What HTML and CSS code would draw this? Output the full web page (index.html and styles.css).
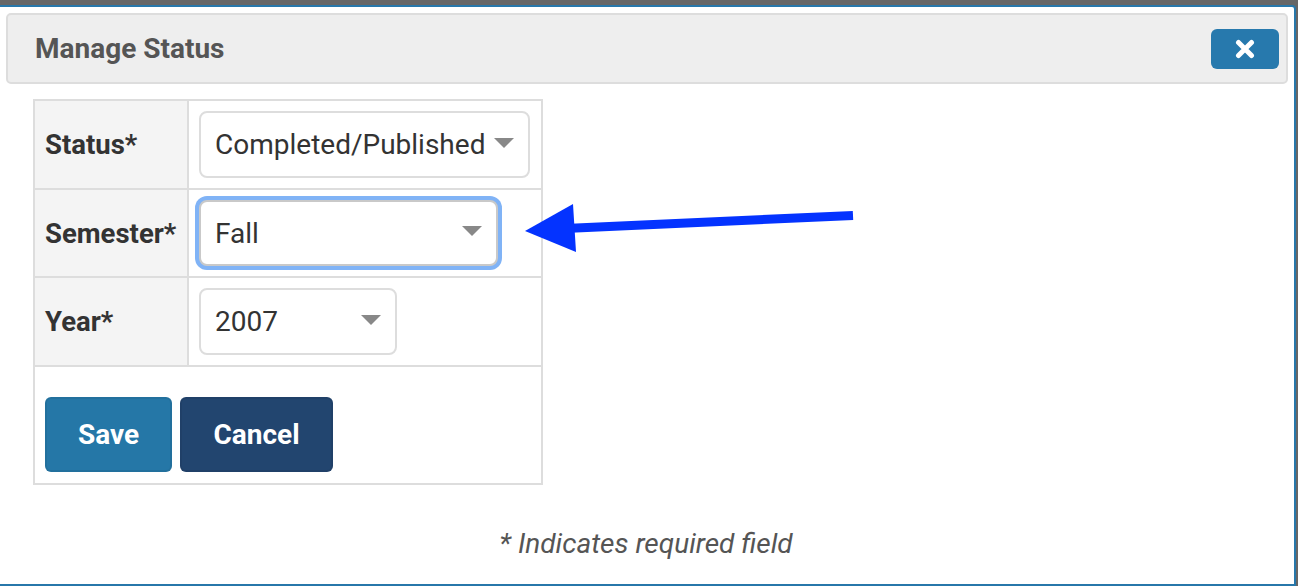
FILE: index.html
```html
<!DOCTYPE html>
<html>
<head>
<meta charset="utf-8">
<link rel="stylesheet" href="styles.css">
</head>
<body>
<div class="dialog">
  <div class="header">
    <h1 class="title">Manage Status</h1>
    <button class="close" aria-label="Close">
      <svg width="20" height="20" viewBox="0 0 20 20"><path d="M3.5 3.5 L16.5 16.5 M16.5 3.5 L3.5 16.5" stroke="#fff" stroke-width="5" stroke-linecap="round"/></svg>
    </button>
  </div>
  <div class="body">
    <table class="form">
      <tr>
        <th class="label">Status*</th>
        <td class="value"><div class="select sel-status"><span>Completed/Published</span><i class="caret"></i></div></td>
      </tr>
      <tr>
        <th class="label">Semester*</th>
        <td class="value"><div class="select sel-semester focus"><span>Fall</span><i class="caret"></i></div></td>
      </tr>
      <tr>
        <th class="label">Year*</th>
        <td class="value"><div class="select sel-year"><span>2007</span><i class="caret"></i></div></td>
      </tr>
      <tr>
        <td class="actions" colspan="2">
          <button class="btn btn-save">Save</button><button class="btn btn-cancel">Cancel</button>
        </td>
      </tr>
    </table>
    <p class="note">* Indicates required field</p>
  </div>
  <svg class="arrow" width="340" height="60" viewBox="520 200 340 60">
    <line x1="565" y1="228.5" x2="853" y2="215.5" stroke="#0433ff" stroke-width="9"/>
    <polygon points="525,231 573,204 576,252" fill="#0433ff"/>
  </svg>
</div>
</body>
</html>
```
FILE: styles.css
```css
html, body {
  margin: 0;
  padding: 0;
  background: #666666;
  font-family: Roboto, "Liberation Sans", sans-serif;
}
.dialog {
  position: relative;
  margin-top: 5px;
  width: 1296px;
  height: 581px;
  box-sizing: border-box;
  background: #ffffff;
  border: 2px solid #2777aa;
  border-left: none;
  border-top-right-radius: 4px;
  padding: 6px 6px 0 0;
}
.header {
  margin-left: 6px;
  height: 71px;
  box-sizing: border-box;
  background: #eeeeee;
  border: 2px solid #dddddd;
  border-radius: 5px;
  display: flex;
  align-items: center;
  justify-content: space-between;
  padding: 0 7px 0 27px;
}
.title {
  margin: 0;
  font-size: 28px;
  font-weight: bold;
  color: #555555;
}
.close {
  width: 68px;
  height: 40px;
  border: none;
  border-radius: 6px;
  background: #2779ad;
  display: flex;
  align-items: center;
  justify-content: center;
  padding: 0;
}
.close svg { display: block; }
.body {
  padding: 15px 0 0 33px;
}
.form {
  border-collapse: collapse;
  border: 2px solid #dddddd;
}
.form th, .form td {
  border: 2px solid #dddddd;
}
.label {
  width: 132px;
  background: #f4f4f4;
  text-align: left;
  padding: 0 10px;
  font-size: 27.5px;
  font-weight: bold;
  color: #333333;
  height: 65px;
}
.value {
  padding: 10px 11px 10px 10px;
}
.select {
  height: 67px;
  box-sizing: border-box;
  border: 2px solid #dddddd;
  border-radius: 8px;
  background: #ffffff;
  display: flex;
  align-items: center;
  justify-content: space-between;
  padding: 0 14px 0 14px;
  font-size: 28px;
  color: #333333;
}
.sel-status { width: 331px; }
.sel-semester { width: 299px; height: 66px; }
.sel-year { width: 198px; }
.focus {
  border-color: #c9c9c9;
  box-shadow: 0 0 0 4px #80b3f6;
}
.caret {
  display: block;
  width: 0;
  height: 0;
  border-left: 10px solid transparent;
  border-right: 10px solid transparent;
  border-top: 10px solid #888888;
  margin-top: -4px;
}
.actions {
  padding: 30px 11px 11px 10px;
  font-size: 0;
}
.btn {
  height: 75px;
  border: 2px solid rgba(0,0,0,0.06);
  border-radius: 6px;
  color: #ffffff;
  font-family: Roboto, "Liberation Sans", sans-serif;
  font-size: 28px;
  font-weight: bold;
  padding: 0;
}
.btn-save { width: 127px; background: #2577a7; margin-right: 8px; }
.btn-cancel { width: 153px; background: #22456f; }
.note {
  margin: 42px 0 0 -29px;
  text-align: center;
  font-style: italic;
  font-size: 28px;
  color: #555555;
}
.arrow {
  position: absolute;
  left: 520px;
  top: 193px;
}
```
